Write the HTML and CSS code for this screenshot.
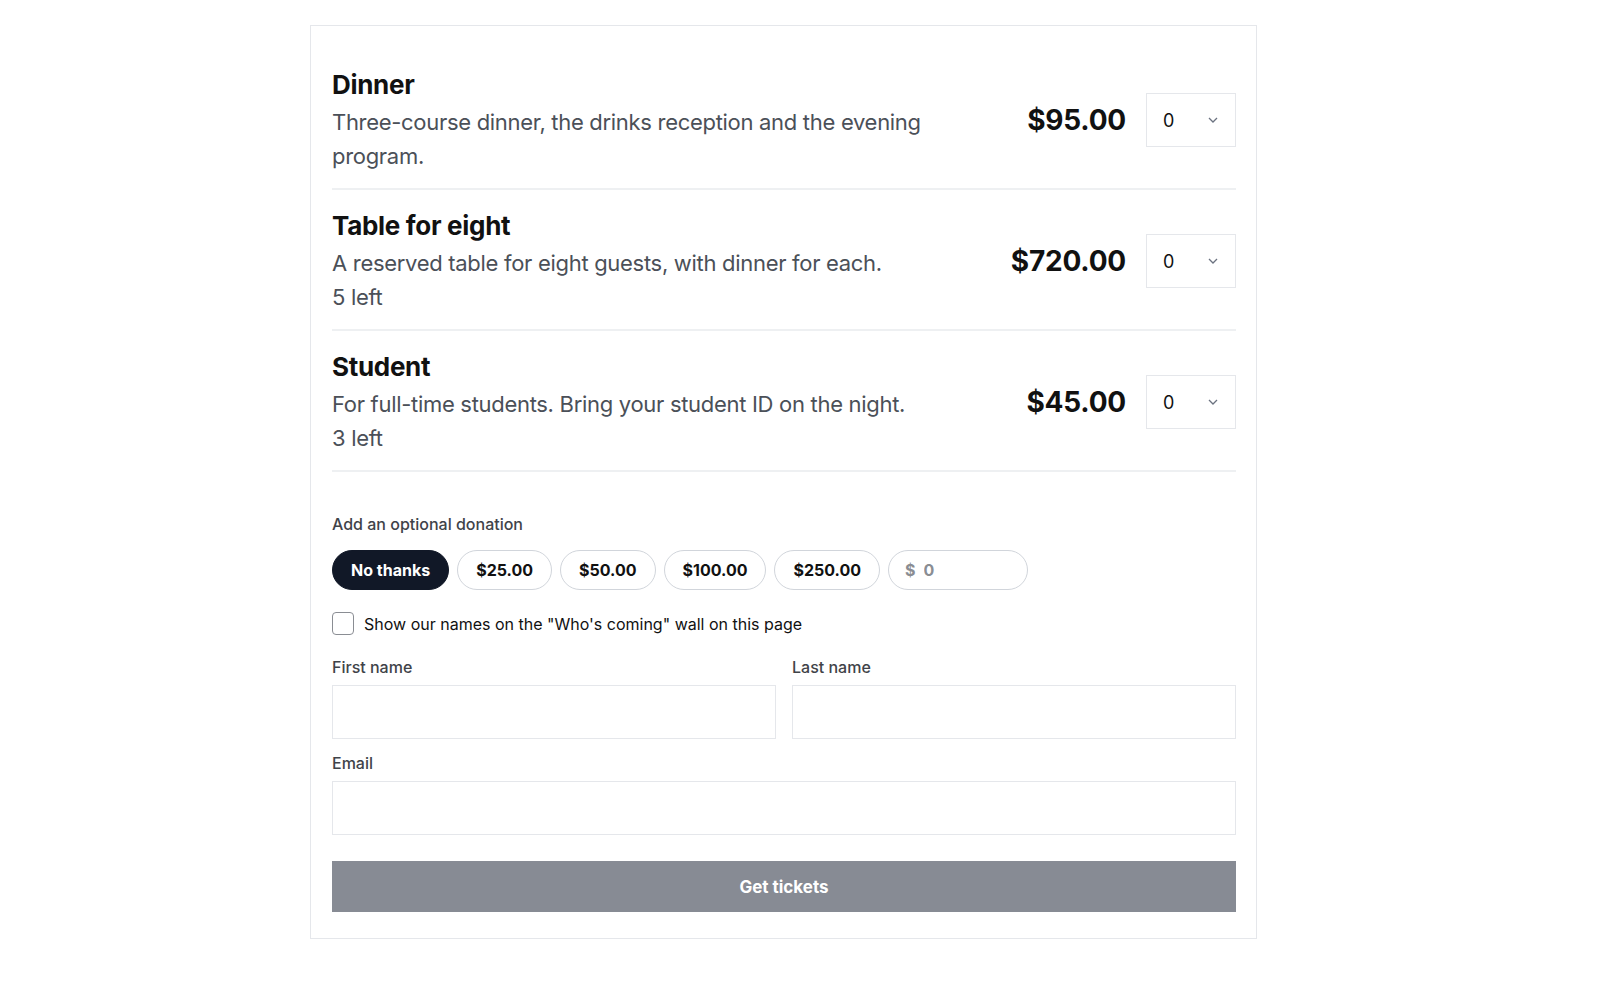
FILE: index.html
```html
<!DOCTYPE html>
<html lang="en">
<head>
    <meta charset="UTF-8">
    <meta name="viewport" content="width=device-width, initial-scale=1.0">
    <title>Tickets</title>
    <link rel="stylesheet" href="styles.css">
</head>
<body>
    <div class="card">
        <div class="ticket">
            <div class="ticket-info">
                <h3 class="ticket-name">Dinner</h3>
                <p class="ticket-desc">Three-course dinner, the drinks reception and the evening program.</p>
            </div>
            <div class="ticket-price">$95.00</div>
            <div class="qty">
                <select class="qty-select"><option>0</option><option>1</option><option>2</option></select>
                <svg class="qty-chevron" width="10" height="6" viewBox="0 0 10 6"><path d="M1 1l4 4 4-4" fill="none" stroke="#6b7280" stroke-width="1.3"/></svg>
            </div>
        </div>
        <div class="ticket">
            <div class="ticket-info">
                <h3 class="ticket-name">Table for eight</h3>
                <p class="ticket-desc">A reserved table for eight guests, with dinner for each.</p>
                <p class="ticket-desc">5 left</p>
            </div>
            <div class="ticket-price">$720.00</div>
            <div class="qty">
                <select class="qty-select"><option>0</option><option>1</option></select>
                <svg class="qty-chevron" width="10" height="6" viewBox="0 0 10 6"><path d="M1 1l4 4 4-4" fill="none" stroke="#6b7280" stroke-width="1.3"/></svg>
            </div>
        </div>
        <div class="ticket">
            <div class="ticket-info">
                <h3 class="ticket-name">Student</h3>
                <p class="ticket-desc">For full-time students. Bring your student ID on the night.</p>
                <p class="ticket-desc">3 left</p>
            </div>
            <div class="ticket-price">$45.00</div>
            <div class="qty">
                <select class="qty-select"><option>0</option><option>1</option></select>
                <svg class="qty-chevron" width="10" height="6" viewBox="0 0 10 6"><path d="M1 1l4 4 4-4" fill="none" stroke="#6b7280" stroke-width="1.3"/></svg>
            </div>
        </div>

        <div class="donation">
            <div class="field-label">Add an optional donation</div>
            <div class="pills">
                <button class="pill pill-active">No thanks</button>
                <button class="pill">$25.00</button>
                <button class="pill">$50.00</button>
                <button class="pill">$100.00</button>
                <button class="pill">$250.00</button>
                <label class="pill pill-custom">
                    <span class="pill-currency">$</span>
                    <input class="pill-input" type="text" placeholder="0">
                </label>
            </div>
        </div>

        <label class="show-names">
            <input type="checkbox" class="checkbox">
            <span>Show our names on the "Who's coming" wall on this page</span>
        </label>

        <div class="name-row">
            <div class="field">
                <label class="field-label">First name</label>
                <input class="text-input" type="text">
            </div>
            <div class="field">
                <label class="field-label">Last name</label>
                <input class="text-input" type="text">
            </div>
        </div>
        <div class="field">
            <label class="field-label">Email</label>
            <input class="text-input" type="email">
        </div>

        <button class="submit" disabled>Get tickets</button>
    </div>
</body>
</html>
```

FILE: styles.css
```css
body {
    margin: 0;
    background: #fff;
    font-family: Inter, "Noto Sans", sans-serif;
    color: #111;
}
.card {
    box-sizing: border-box;
    width: 947px;
    margin: 25px 0 0 310px;
    padding: 23px 20px 26px 21px;
    border: 1px solid #e5e7eb;
}
.ticket {
    display: flex;
    align-items: center;
    padding: 18px 0 15px;
    border-bottom: 2px solid #eef0f2;
}
.ticket-info {
    flex: 1;
    max-width: 620px;
    margin-right: auto;
}
.ticket-name {
    margin: 0 0 2px;
    font-size: 26px;
    line-height: 36px;
    font-weight: 700;
    letter-spacing: -0.3px;
}
.ticket-desc {
    margin: 0;
    font-size: 22px;
    line-height: 34px;
    color: #4b5058;
    letter-spacing: -0.3px;
}
.ticket-price {
    margin-left: auto;
    font-size: 28px;
    font-weight: 700;
    letter-spacing: -0.2px;
}
.qty {
    position: relative;
    margin-left: 20px;
}
.qty-select {
    appearance: none;
    -webkit-appearance: none;
    box-sizing: border-box;
    width: 90px;
    height: 54px;
    padding: 0 16px;
    border: 1px solid #e5e7eb;
    border-radius: 0;
    background: #fff;
    font-family: inherit;
    font-size: 18px;
    color: #111;
}
.qty-chevron {
    position: absolute;
    right: 18px;
    top: 24px;
    pointer-events: none;
}
.donation {
    margin-top: 41px;
}
.field-label {
    display: block;
    font-size: 16px;
    line-height: 22px;
    font-weight: 500;
    color: #3f4349;
}
.pills {
    display: flex;
    gap: 8px;
    margin-top: 15px;
}
.pill {
    box-sizing: border-box;
    height: 40px;
    padding: 0 18px;
    border: 1px solid #d1d5db;
    border-radius: 20px;
    background: #fff;
    font-family: inherit;
    font-size: 16px;
    font-weight: 700;
    color: #111;
}
.pill-active {
    background: #111827;
    border-color: #111827;
    color: #fff;
}
.pill-custom {
    display: flex;
    align-items: center;
    width: 140px;
    padding: 0 16px;
}
.pill-currency {
    color: #8a8d93;
    margin-right: 8px;
}
.pill-input {
    width: 60px;
    border: none;
    outline: none;
    padding: 0;
    font-family: inherit;
    font-size: 16px;
    font-weight: 700;
}
.pill-input::placeholder {
    color: #8a8d93;
}
.show-names {
    display: flex;
    align-items: center;
    gap: 10px;
    margin-top: 22px;
    font-size: 16px;
    color: #111;
}
.checkbox {
    appearance: none;
    -webkit-appearance: none;
    box-sizing: border-box;
    width: 22px;
    height: 23px;
    margin: 0;
    border: 1px solid #8a8d93;
    border-radius: 4px;
}
.name-row {
    display: flex;
    gap: 16px;
    margin-top: 21px;
}
.name-row .field {
    flex: 1;
}
.field .field-label {
    margin-bottom: 7px;
}
.name-row + .field {
    margin-top: 13px;
}
.text-input {
    display: block;
    box-sizing: border-box;
    width: 100%;
    height: 54px;
    padding: 0 14px;
    border: 1px solid #e5e7eb;
    border-radius: 0;
    font-family: inherit;
    font-size: 16px;
}
.submit {
    display: block;
    width: 100%;
    height: 51px;
    margin-top: 26px;
    border: none;
    background: #878b94;
    color: #fff;
    font-family: inherit;
    font-size: 17px;
    font-weight: 700;
}
```
